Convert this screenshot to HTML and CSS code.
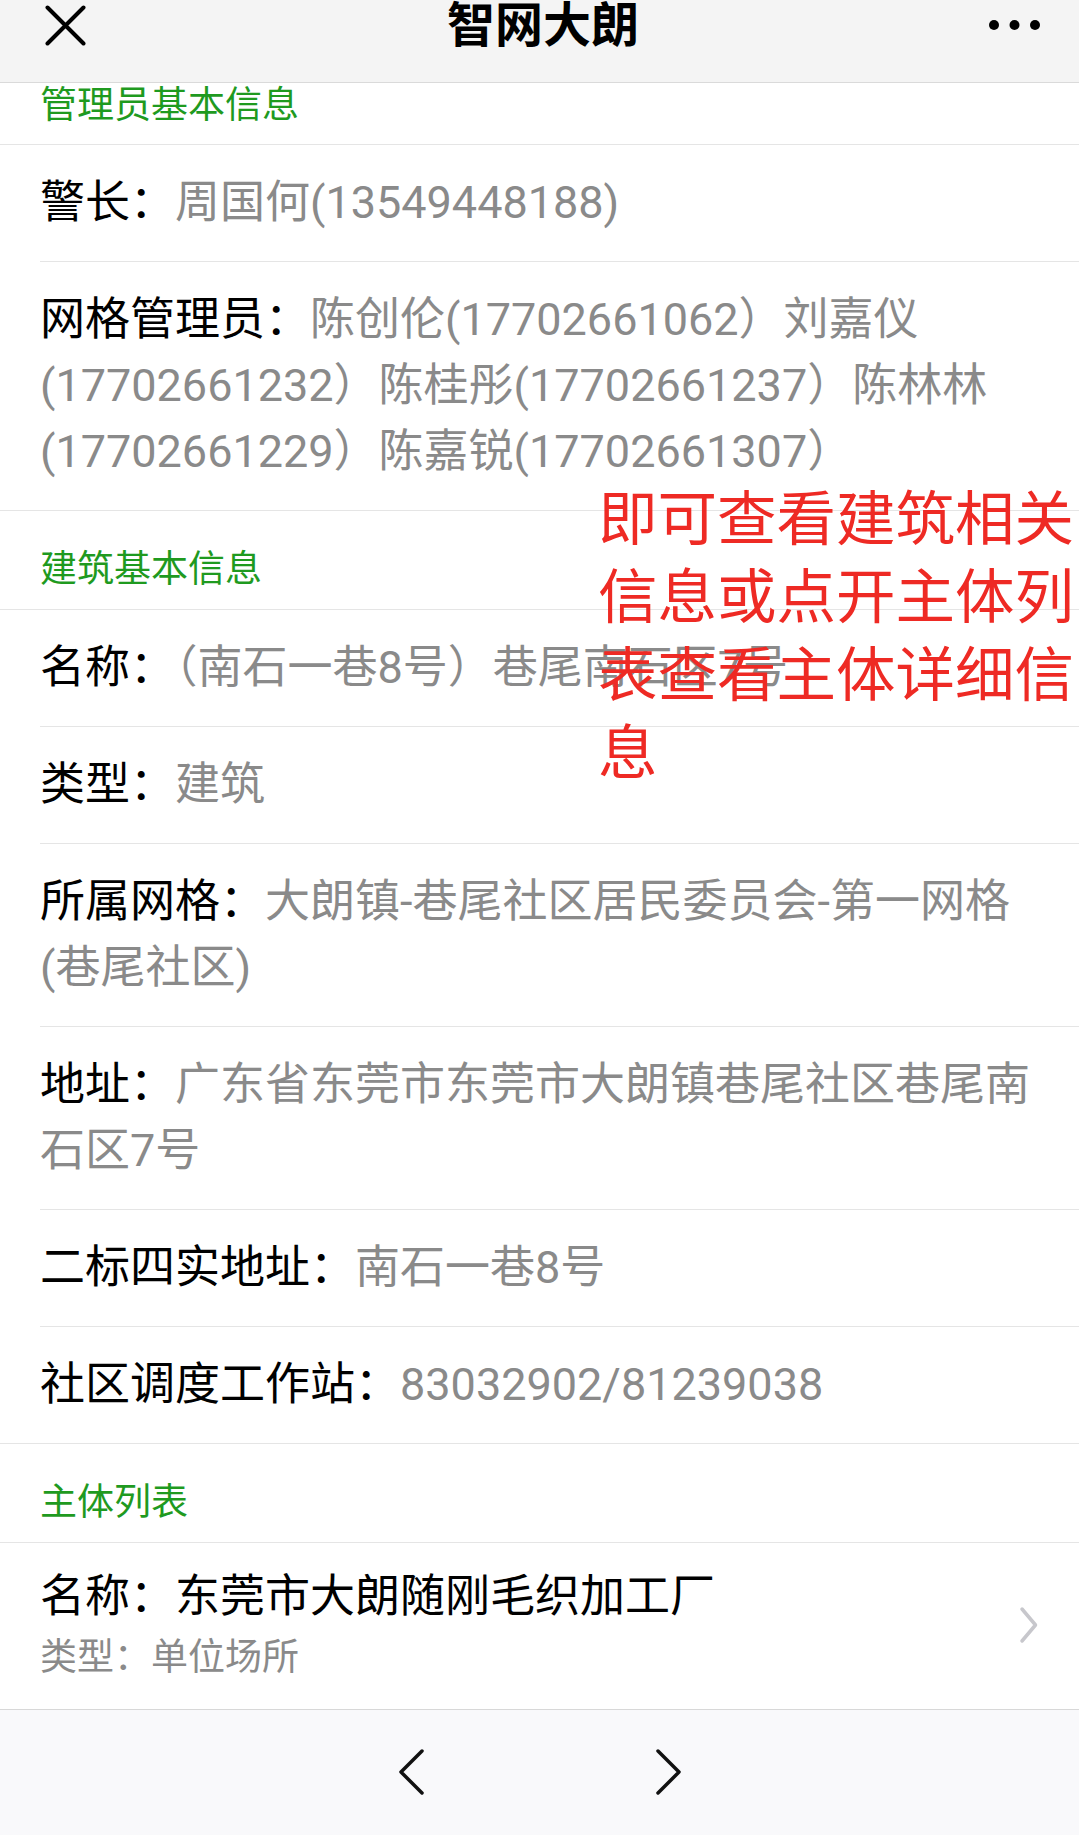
FILE: index.html
```html
<!DOCTYPE html>
<html lang="zh-CN">
<head>
  <meta charset="UTF-8" />
  <meta name="viewport" content="width=device-width, initial-scale=1" />
  <title>智网大朗</title>
  <link rel="stylesheet" href="styles.css">
</head>
<body>
  <header class="topbar">
    <span class="topbar-left">
      <svg class="icon-close" width="41" height="41" viewBox="0 0 41 41">
        <path d="M2.5 2.5 L38.5 38.5 M38.5 2.5 L2.5 38.5" stroke="#000" stroke-width="4" stroke-linecap="round" fill="none"/>
      </svg>
    </span>
    <h1 class="topbar-title">智网大朗</h1>
    <span class="topbar-right">
      <svg class="icon-more" width="52" height="10" viewBox="0 0 52 10">
        <circle cx="5" cy="5" r="5" fill="#000"/>
        <circle cx="25.5" cy="5" r="5" fill="#000"/>
        <circle cx="46" cy="5" r="5" fill="#000"/>
      </svg>
    </span>
  </header>

  <h2 class="section-title first">管理员基本信息</h2>
  <div class="info-group">
    <div class="info-row"><span class="label">警长：</span><span class="value">周国何(13549448188)</span></div>
    <div class="info-row"><span class="label">网格管理员：</span><span class="value">陈创伦(17702661062）刘嘉仪(17702661232）陈桂彤(17702661237）陈林林(17702661229）陈嘉锐(17702661307）</span></div>
  </div>

  <h2 class="section-title">建筑基本信息</h2>
  <div class="info-group">
    <div class="info-row"><span class="label">名称：</span><span class="value">（南石一巷8号）巷尾南石区7号</span></div>
    <div class="info-row"><span class="label">类型：</span><span class="value">建筑</span></div>
    <div class="info-row"><span class="label">所属网格：</span><span class="value">大朗镇-巷尾社区居民委员会-第一网格(巷尾社区)</span></div>
    <div class="info-row"><span class="label">地址：</span><span class="value">广东省东莞市东莞市大朗镇巷尾社区巷尾南石区7号</span></div>
    <div class="info-row"><span class="label">二标四实地址：</span><span class="value">南石一巷8号</span></div>
    <div class="info-row"><span class="label">社区调度工作站：</span><span class="value">83032902/81239038</span></div>
  </div>

  <h2 class="section-title">主体列表</h2>
  <div class="entity">
    <div class="entity-text">
      <div class="entity-name">名称：东莞市大朗随刚毛织加工厂</div>
      <div class="entity-type">类型：单位场所</div>
    </div>
    <svg class="icon-arrow" width="20" height="38" viewBox="0 0 20 38">
      <path d="M3 3 L16.5 19 L3 35" stroke="#c7c7cc" stroke-width="3.5" stroke-linecap="round" stroke-linejoin="round" fill="none"/>
    </svg>
  </div>

  <footer class="toolbar">
    <svg width="26" height="46" viewBox="0 0 26 46">
      <path d="M24 2 L3 23 L24 44" stroke="#111" stroke-width="3.5" stroke-linecap="round" stroke-linejoin="round" fill="none"/>
    </svg>
    <svg width="26" height="46" viewBox="0 0 26 46">
      <path d="M2 2 L23 23 L2 44" stroke="#111" stroke-width="3.5" stroke-linecap="round" stroke-linejoin="round" fill="none"/>
    </svg>
  </footer>

  <p class="note">即可查看建筑相关信息或点开主体列表查看主体详细信息</p>
</body>
</html>
```

FILE: styles.css
```css
body {
  margin: 0;
  width: 1079px;
  position: relative;
  background: #fff;
  font-family: Roboto, "Noto Sans CJK SC", sans-serif;
  color: #000;
}
.topbar {
  display: grid;
  grid-template-columns: 1fr auto 1fr;
  align-items: start;
  height: 82px;
  padding: 0 38px 0 45px;
  background: #f4f4f4;
  border-bottom: 1px solid #dadada;
}
.icon-close {
  display: block;
  margin-top: 5px;
}
.topbar-title {
  margin: 0;
  padding-top: 1px;
  font-size: 48px;
  line-height: 50px;
  font-weight: 700;
}
.topbar-right {
  justify-self: end;
}
.icon-more {
  display: block;
  margin-top: 20px;
}
.section-title {
  margin: 0;
  padding: 39px 40px 19px;
  font-size: 37px;
  line-height: 40px;
  font-weight: 400;
  color: #1f9a1f;
  border-bottom: 1px solid #e5e5e5;
}
.section-title.first {
  padding-top: 3px;
  padding-bottom: 18px;
}
.info-group {
  border-bottom: 1px solid #e5e5e5;
}
.info-row {
  margin-left: 40px;
  padding: 25px 30px 25px 0;
  font-size: 45px;
  line-height: 66px;
  border-bottom: 1px solid #e5e5e5;
}
.info-row:last-child {
  border-bottom: none;
}
.label {
  color: #000;
}
.value {
  color: #8a8a8a;
}
.entity {
  display: flex;
  align-items: center;
  justify-content: space-between;
  padding: 26px 40px 28px;
  border-bottom: 1px solid #d8d8d8;
}
.entity-name {
  font-size: 45px;
  line-height: 56px;
}
.entity-type {
  margin-top: 10px;
  font-size: 37px;
  line-height: 46px;
  color: #8a8a8a;
}
.icon-arrow {
  display: block;
}
.toolbar {
  display: flex;
  justify-content: center;
  align-items: center;
  gap: 232px;
  height: 128px;
  padding-bottom: 4px;
  box-sizing: border-box;
  background: #f9f9fb;
}
.note {
  position: absolute;
  left: 598px;
  top: 481px;
  width: 480px;
  margin: 0;
  font-size: 59.5px;
  line-height: 78px;
  color: #ee2a24;
}
```
